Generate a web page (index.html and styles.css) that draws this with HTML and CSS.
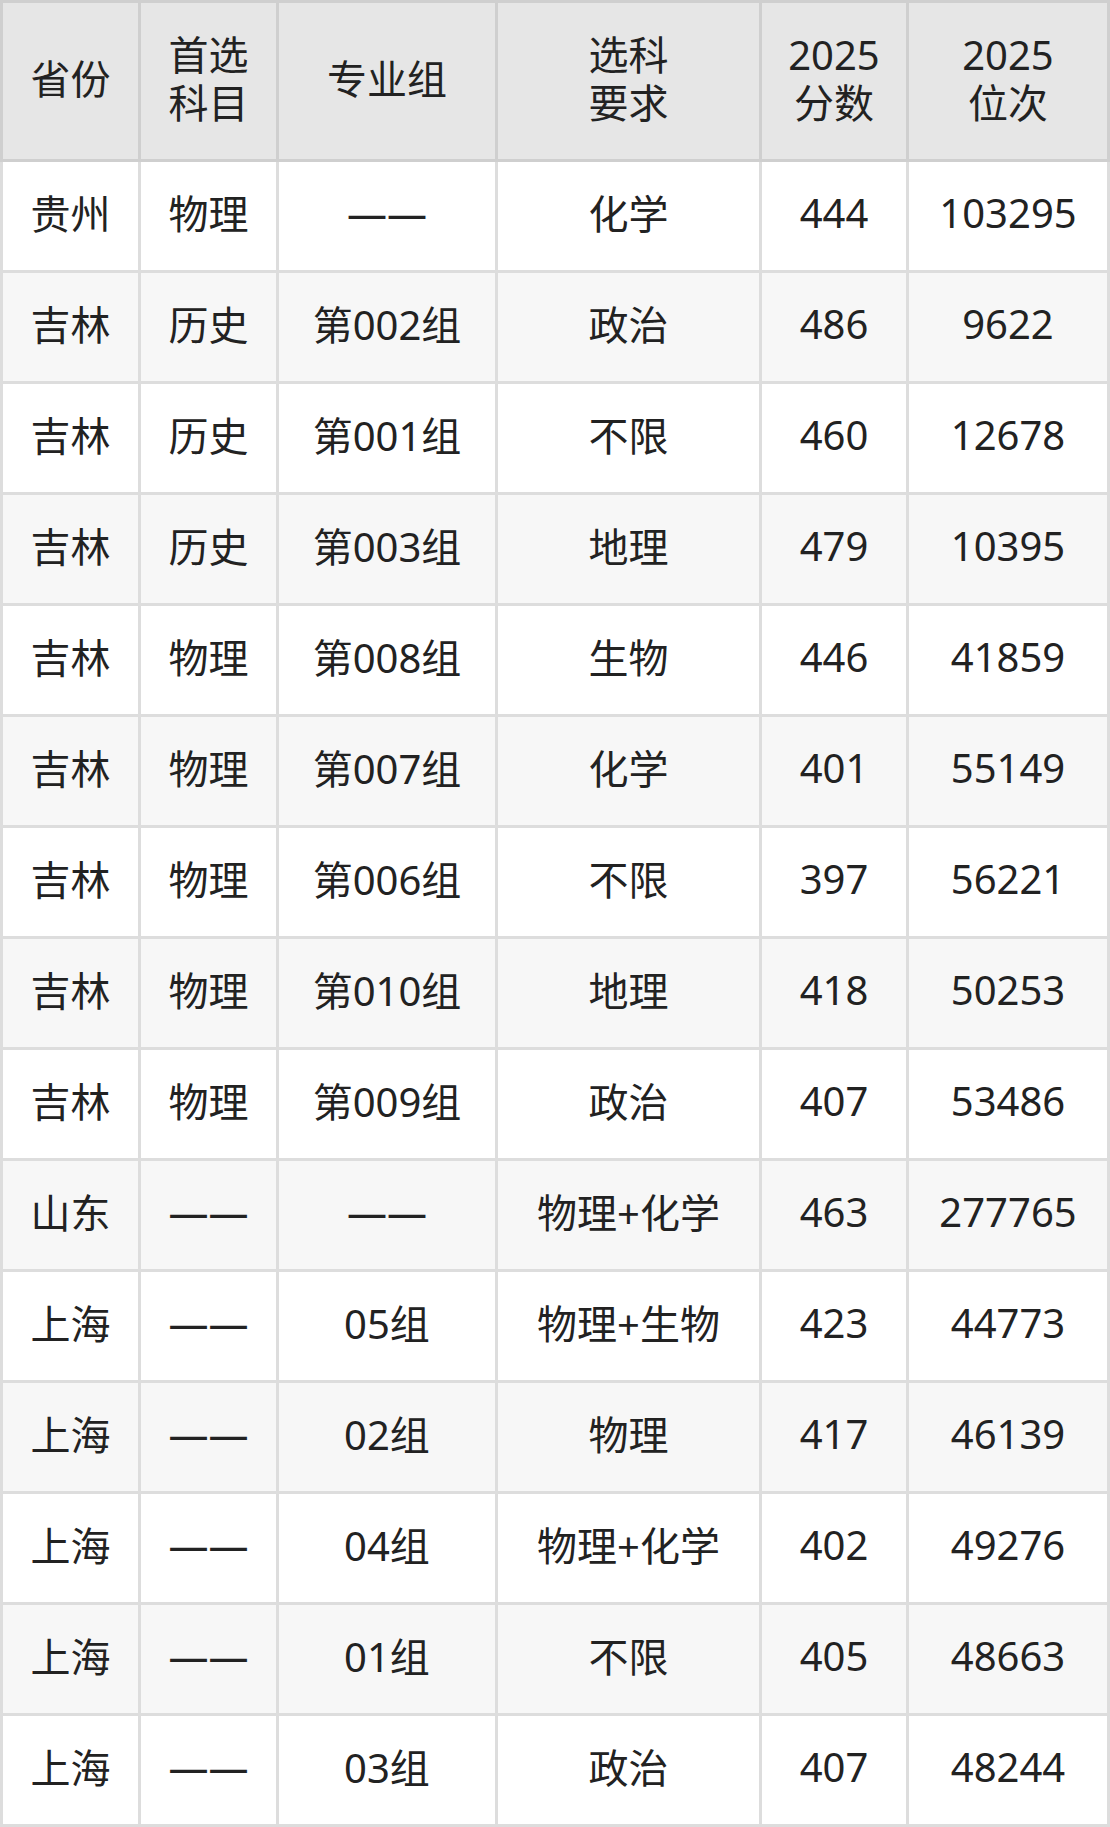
FILE: index.html
```html
<!DOCTYPE html>
<html lang="zh-CN">
<head>
<meta charset="utf-8">
<title>分数线</title>
<link rel="stylesheet" href="styles.css">
</head>
<body>
<div class="table">
  <div class="head">
    <div class="cell">省份</div>
    <div class="cell">首选<br>科目</div>
    <div class="cell">专业组</div>
    <div class="cell">选科<br>要求</div>
    <div class="cell">2025<br>分数</div>
    <div class="cell">2025<br>位次</div>
  </div>
  <div class="body">
    <div class="row"><div class="cell">贵州</div><div class="cell">物理</div><div class="cell">——</div><div class="cell">化学</div><div class="cell">444</div><div class="cell">103295</div></div>
    <div class="row alt"><div class="cell">吉林</div><div class="cell">历史</div><div class="cell">第002组</div><div class="cell">政治</div><div class="cell">486</div><div class="cell">9622</div></div>
    <div class="row"><div class="cell">吉林</div><div class="cell">历史</div><div class="cell">第001组</div><div class="cell">不限</div><div class="cell">460</div><div class="cell">12678</div></div>
    <div class="row alt"><div class="cell">吉林</div><div class="cell">历史</div><div class="cell">第003组</div><div class="cell">地理</div><div class="cell">479</div><div class="cell">10395</div></div>
    <div class="row"><div class="cell">吉林</div><div class="cell">物理</div><div class="cell">第008组</div><div class="cell">生物</div><div class="cell">446</div><div class="cell">41859</div></div>
    <div class="row alt"><div class="cell">吉林</div><div class="cell">物理</div><div class="cell">第007组</div><div class="cell">化学</div><div class="cell">401</div><div class="cell">55149</div></div>
    <div class="row"><div class="cell">吉林</div><div class="cell">物理</div><div class="cell">第006组</div><div class="cell">不限</div><div class="cell">397</div><div class="cell">56221</div></div>
    <div class="row alt"><div class="cell">吉林</div><div class="cell">物理</div><div class="cell">第010组</div><div class="cell">地理</div><div class="cell">418</div><div class="cell">50253</div></div>
    <div class="row"><div class="cell">吉林</div><div class="cell">物理</div><div class="cell">第009组</div><div class="cell">政治</div><div class="cell">407</div><div class="cell">53486</div></div>
    <div class="row alt"><div class="cell">山东</div><div class="cell">——</div><div class="cell">——</div><div class="cell">物理+化学</div><div class="cell">463</div><div class="cell">277765</div></div>
    <div class="row"><div class="cell">上海</div><div class="cell">——</div><div class="cell">05组</div><div class="cell">物理+生物</div><div class="cell">423</div><div class="cell">44773</div></div>
    <div class="row alt"><div class="cell">上海</div><div class="cell">——</div><div class="cell">02组</div><div class="cell">物理</div><div class="cell">417</div><div class="cell">46139</div></div>
    <div class="row"><div class="cell">上海</div><div class="cell">——</div><div class="cell">04组</div><div class="cell">物理+化学</div><div class="cell">402</div><div class="cell">49276</div></div>
    <div class="row alt"><div class="cell">上海</div><div class="cell">——</div><div class="cell">01组</div><div class="cell">不限</div><div class="cell">405</div><div class="cell">48663</div></div>
    <div class="row"><div class="cell">上海</div><div class="cell">——</div><div class="cell">03组</div><div class="cell">政治</div><div class="cell">407</div><div class="cell">48244</div></div>
  </div>
</div>
</body>
</html>
```
FILE: styles.css
```css
html, body {
  margin: 0;
  padding: 0;
  background: #ffffff;
}
.table {
  width: 1110px;
  font-family: "Noto Sans", "Noto Sans CJK SC", sans-serif;
  font-size: 40px;
  color: #222222;
}
.head,
.row {
  display: grid;
  grid-template-columns: 135px 135px 216px 261px 144px 198px;
  column-gap: 3px;
}
.head {
  background: #cfcfcf;
  padding: 3px;
}
.head .cell {
  height: 156px;
  box-sizing: border-box;
  padding-bottom: 5px;
  background: #e6e6e6;
  line-height: 48px;
}
.body {
  background: #dddddd;
  padding: 0 3px 3px;
  display: flex;
  flex-direction: column;
  row-gap: 3px;
}
.row {
  background: #dddddd;
}
.row .cell {
  height: 108px;
  box-sizing: border-box;
  padding-bottom: 8px;
  background: #ffffff;
}
.row.alt .cell {
  background: #f7f7f7;
}
.cell {
  display: flex;
  align-items: center;
  justify-content: center;
  text-align: center;
  white-space: nowrap;
}
```
